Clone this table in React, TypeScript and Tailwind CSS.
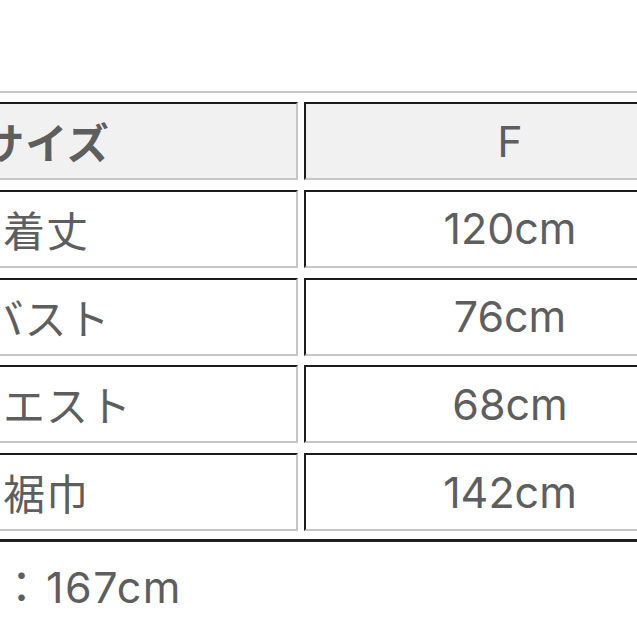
import React from "react";

const jp = "font-['Noto_Sans_CJK_JP',sans-serif]";
const latin = "font-['Inter','Noto_Sans_CJK_JP',sans-serif]";

const cellBase =
  "h-[78px] flex items-center justify-center border-2 border-t-[#1c1c1c] border-l-[#1c1c1c] border-b-[#c6c6c6] border-r-[#c6c6c6]";

const rows: [string, string][] = [
  ["着丈", "120cm"],
  ["バスト", "76cm"],
  ["ウエスト", "68cm"],
  ["裾巾", "142cm"],
];

export default function App() {
  return (
    <div className="w-[637px] h-[637px] overflow-hidden bg-white pt-[91px] text-[#5e5e5e]">
      <div className="ml-[-216px] w-[1150px] border-t-2 border-l-2 border-t-[#c8c8c8] border-l-[#c8c8c8] border-b-[3px] border-r-[3px] border-b-[#1e1e1e] border-r-[#1e1e1e] pl-[8px] pt-[9px] pb-[8px]">
        <div className="grid grid-cols-[504px_412px] gap-x-[6px] gap-y-[9.75px]">
          <div className={`${cellBase} bg-[#f1f1f1]`}>
            <span className={`${jp} text-[42px] font-bold leading-none tracking-[1px]`}>サイズ</span>
          </div>
          <div className={`${cellBase} bg-[#f1f1f1]`}>
            <span className={`${latin} text-[43px] leading-none`}>F</span>
          </div>
          {rows.map(([k, v]) => (
            <React.Fragment key={k}>
              <div className={`${cellBase} bg-white`}>
                <span className={`${jp} text-[42px] leading-none tracking-[1px]`}>{k}</span>
              </div>
              <div className={`${cellBase} bg-white`}>
                <span className={`${latin} text-[43px] leading-none`}>{v}</span>
              </div>
            </React.Fragment>
          ))}
        </div>
      </div>
      <div className={`${latin} mt-[21px] text-[43px] leading-[42px] whitespace-nowrap`}>
        <span className={jp}>：</span>
        <span className="tracking-[1.5px] ml-[3px]">167cm</span>
      </div>
    </div>
  );
}
